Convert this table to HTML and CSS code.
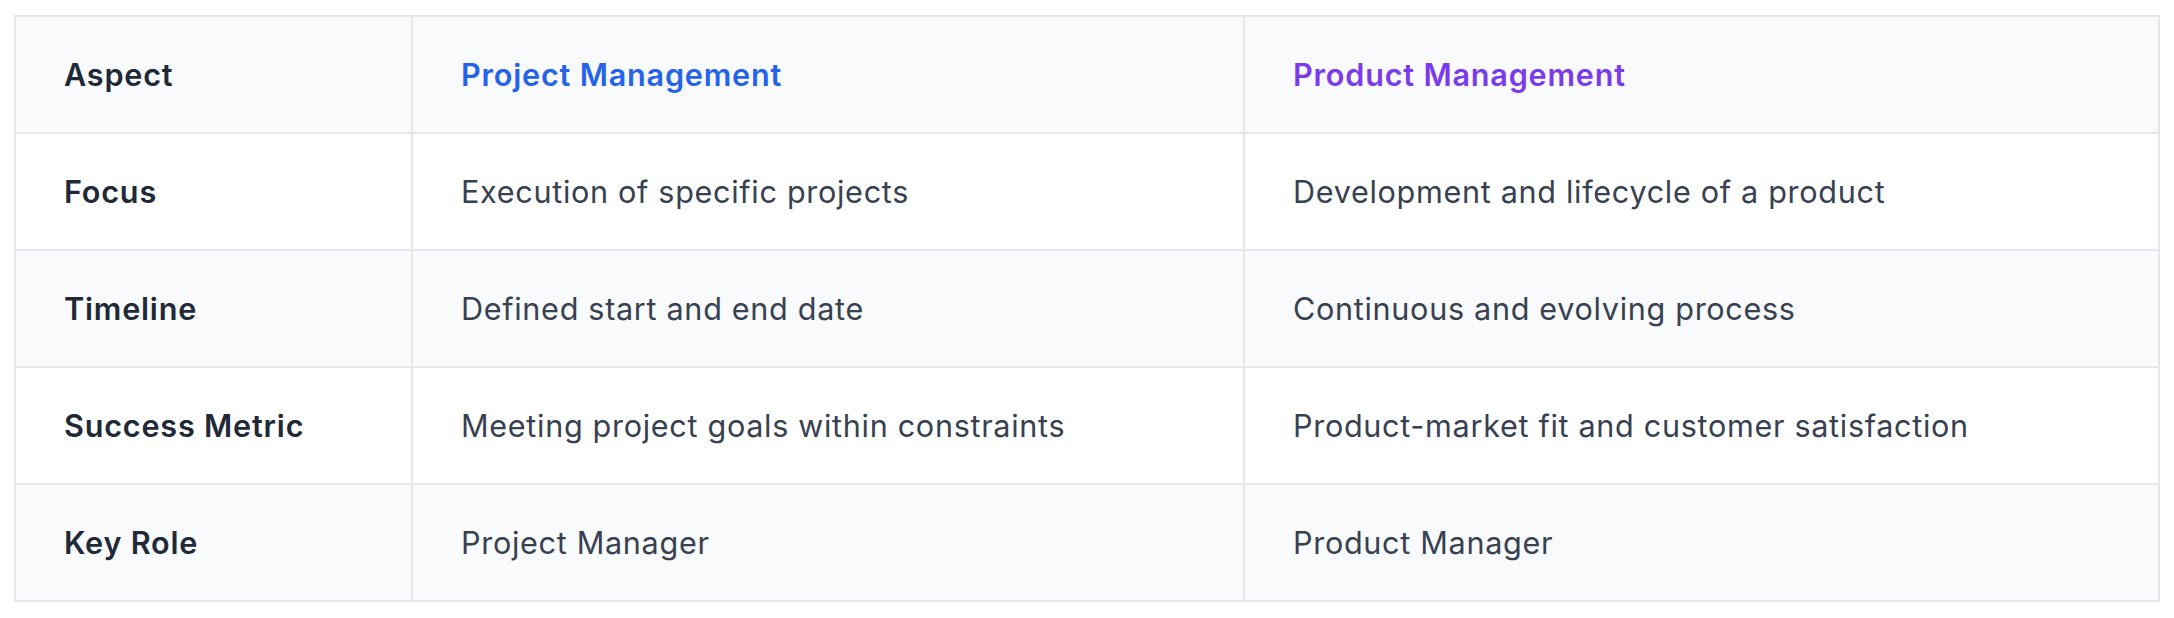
FILE: index.html
```html
<!DOCTYPE html>
<html lang="en">
<head>
<meta charset="utf-8">
<title>Project vs Product Management</title>
<link rel="stylesheet" href="styles.css">
</head>
<body>
<div class="wrap">
<table class="compare">
<colgroup>
<col class="c1">
<col class="c2">
<col class="c3">
</colgroup>
<thead>
<tr>
<th class="aspect">Aspect</th>
<th class="project">Project Management</th>
<th class="product">Product Management</th>
</tr>
</thead>
<tbody>
<tr>
<th>Focus</th>
<td>Execution of specific projects</td>
<td>Development and lifecycle of a product</td>
</tr>
<tr class="alt">
<th>Timeline</th>
<td>Defined start and end date</td>
<td>Continuous and evolving process</td>
</tr>
<tr>
<th>Success Metric</th>
<td>Meeting project goals within constraints</td>
<td>Product-market fit and customer satisfaction</td>
</tr>
<tr class="alt">
<th>Key Role</th>
<td>Project Manager</td>
<td>Product Manager</td>
</tr>
</tbody>
</table>
</div>
</body>
</html>
```

FILE: styles.css
```css
html, body {
  margin: 0;
  padding: 0;
  background: #ffffff;
}

.wrap {
  padding: 15px 14px;
}

.compare {
  width: 100%;
  border-collapse: collapse;
  table-layout: fixed;
  font-family: Inter, "Noto Sans", sans-serif;
  font-size: 30.6px;
  line-height: 46px;
  border: 2px solid #e5e7eb;
}

.c1 { width: 397px; }
.c2 { width: 832px; }

.compare th,
.compare td {
  border: 2px solid #e5e7eb;
  padding: 35px 48px 34px;
  text-align: left;
  vertical-align: middle;
}

.compare th {
  font-weight: 600;
  color: #1f2937;
  letter-spacing: 0.8px;
}

.compare td {
  font-weight: 400;
  color: #374151;
  letter-spacing: 0.68px;
}

.compare thead tr,
.compare tr.alt {
  background: #f9fafb;
}

.compare th.project {
  color: #2563eb;
}

.compare th.product {
  color: #7c3aed;
}
```
